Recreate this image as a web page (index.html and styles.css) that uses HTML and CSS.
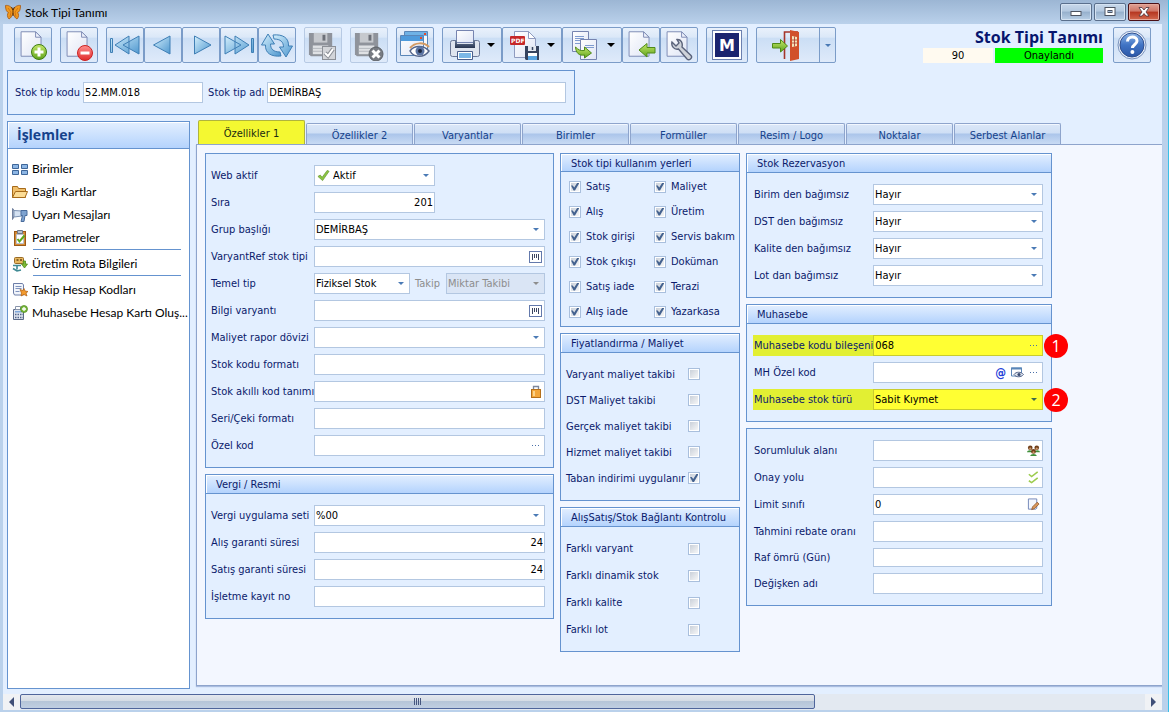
FILE: index.html
```html
<!DOCTYPE html>
<html lang="tr">
<head>
<meta charset="utf-8">
<title>Stok Tipi Tanımı</title>
<link rel="stylesheet" href="styles.css">
</head>
<body>
<svg class="defs" aria-hidden="true">
  <defs>
    <linearGradient id="blue" x1="0" y1="0" x2="1" y2="1"><stop offset="0" stop-color="#d4effc"/><stop offset="1" stop-color="#4e97cf"/></linearGradient>
    <linearGradient id="page" x1="0" y1="0" x2="1" y2="1"><stop offset="0" stop-color="#ffffff"/><stop offset="1" stop-color="#dfe5f5"/></linearGradient>
    <linearGradient id="green" x1="0" y1="0" x2="0" y2="1"><stop offset="0" stop-color="#c5e86a"/><stop offset="1" stop-color="#5fa31c"/></linearGradient>
    <linearGradient id="red" x1="0" y1="0" x2="0" y2="1"><stop offset="0" stop-color="#ff8f8f"/><stop offset="1" stop-color="#e02a2a"/></linearGradient>
    <linearGradient id="steel" x1="0" y1="0" x2="0" y2="1"><stop offset="0" stop-color="#6f7f9c"/><stop offset="1" stop-color="#28344f"/></linearGradient>
    <linearGradient id="orb" x1="0" y1="0" x2="0" y2="1"><stop offset="0" stop-color="#8fb6e8"/><stop offset="0.5" stop-color="#3f73c4"/><stop offset="1" stop-color="#2c57a6"/></linearGradient>
    <symbol id="i-page" viewBox="0 0 32 32"><path d="M4.500 2.500h16l6 6v21h-22z" fill="url(#page)" stroke="#7684b0"/><path d="M20.500 2.500v6h6z" fill="#eef2fb" stroke="#7684b0"/></symbol>
    <symbol id="i-floppy" viewBox="0 0 32 32"><path d="M2 4h24v24H4l-2-2z" fill="#8f939b"/><path d="M7 4h14v10H7z" fill="#c6c9ce"/><rect x="16" y="6" width="3" height="6" fill="#6c7078"/><path d="M6 17h16v9H6z" fill="#dfe1e4"/><path d="M6 20h16M6 23h16" stroke="#b5b8be"/></symbol>
    <symbol id="i-bar" viewBox="0 0 13 12"><rect x="0.500" y="0.500" width="12" height="11" fill="#fff" stroke="#6379ac"/><path d="M3.500 3v6M9.500 3v6" stroke="#3a4460"/><path d="M5.500 3v4M7.500 3v4" stroke="#3a4460"/></symbol>
    <symbol id="i-dots" viewBox="0 0 9 3"><path d="M1 1h1v1H1zM4 1h1v1H4zM7 1h1v1H7z" fill="#4a6fa8"/></symbol>
  </defs>
</svg>

<div class="window">
  <header class="titlebar">
    <svg class="logo" viewBox="0 0 16 16"><path d="M8 6C6 2 3 1 0.500 1.500c0 4 1 6.500 3 7C2 10 2 13 4 15c2-1 3-3 4-6 1 3 2 5 4 6 2-2 2-5 0.500-6.500 2-0.500 3-3 3-7C13 1 10 2 8 6z" fill="#f09a20" stroke="#a8560c" stroke-width="0.800"/><path d="M3 4l3 4L5 13M13 4l-3 4 1 5" stroke="#c96c10" fill="none" stroke-width="0.800"/><path d="M8 5v7M8 6L6.500 3M8 6l1.500-3" stroke="#5b3008" fill="none"/></svg>
    <h1>Stok Tipi Tanımı</h1>
    <div class="winbtns">
      <button aria-label="Küçült"><svg viewBox="0 0 12 12"><rect x="1" y="5.500" width="10" height="4" fill="#fff" stroke="#4c5360"/></svg></button>
      <button aria-label="Büyüt"><svg viewBox="0 0 12 12"><rect x="1" y="1.500" width="10" height="8" fill="#fff" stroke="#4c5360"/><rect x="4" y="4.500" width="4" height="2" fill="#9fb8d6" stroke="#4c5360"/></svg></button>
      <button class="close" aria-label="Kapat"><svg viewBox="0 0 12 12"><path d="M1 1.500h3l2 2.500 2-2.500h3L8 6l3 4H8L6 7.500 4 10H1l3-4z" fill="#fff" stroke="#4a3038" stroke-width="0.800"/></svg></button>
    </div>
  </header>

  <main class="client">
    <div class="top">
      <nav class="toolbar">
        <div class="group"><button aria-label="Yeni"><svg viewBox="0 0 32 32"><use href="#i-page" width="29" height="30"/><circle cx="22" cy="23" r="7.500" fill="url(#green)" stroke="#3f7d12"/><path d="M22 18.500v9M17.500 23h9" stroke="#fff" stroke-width="3"/></svg></button></div>
        <div class="group"><button aria-label="Sil"><svg viewBox="0 0 32 32"><use href="#i-page" width="29" height="30"/><circle cx="22" cy="24" r="7.500" fill="url(#red)" stroke="#c22"/><path d="M17.500 24h9" stroke="#fff" stroke-width="3"/></svg></button></div>
        <div class="group">
          <button aria-label="İlk"><svg viewBox="0 0 32 32"><path d="M1.500 9.500h2v14h-2zM20 7v18L6 16zM30 7v18L14 16z" fill="url(#blue)" stroke="#3f7fb5"/></svg></button>
          <button aria-label="Önceki"><svg viewBox="0 0 32 32"><path d="M23 7v18L6.500 16z" fill="url(#blue)" stroke="#3f7fb5"/></svg></button>
          <button aria-label="Sonraki"><svg viewBox="0 0 32 32"><path d="M9.500 7v18L26 16z" fill="url(#blue)" stroke="#3f7fb5"/></svg></button>
          <button aria-label="Son"><svg viewBox="0 0 32 32"><path d="M28.500 9.500h2v14h-2zM12 7v18l14-9zM2 7v18l16-9z" fill="url(#blue)" stroke="#3f7fb5"/></svg></button>
          <button aria-label="Yenile"><svg viewBox="0 0 32 32"><path d="M0.500 16L7 5l6.500 10h-4c0 5 3 8 9.500 8l1 4C10 28 4 24 4.500 16z" fill="url(#blue)" stroke="#3f7fb5"/><path d="M31.500 17L25 28l-6.500-10h4c0-5-3-8-9.500-8l-1-4C22 5 28 9 27.500 17z" fill="url(#blue)" stroke="#3f7fb5"/></svg></button>
        </div>
        <div class="group"><button disabled aria-label="Kaydet"><svg viewBox="0 0 32 32"><use href="#i-floppy" width="31" height="31"/><rect x="15.500" y="17.500" width="13" height="13" fill="#d3d5d9" stroke="#8c9097"/><path d="M18 24l3 3 5-7" stroke="#8c9097" stroke-width="4" fill="none"/><path d="M18 24l3 3 5-7" stroke="#fff" stroke-width="2" fill="none"/></svg></button></div>
        <div class="group"><button disabled aria-label="İptal"><svg viewBox="0 0 32 32"><use href="#i-floppy" width="31" height="31"/><circle cx="23" cy="25" r="7" fill="#777b82" stroke="#5e6268"/><path d="M19.500 21.500l7 7M26.500 21.500l-7 7" stroke="#fff" stroke-width="3"/></svg></button></div>
        <div class="group"><button aria-label="İzle"><svg viewBox="0 0 32 32"><path d="M5.500 2.500h23v18h-23z" fill="#f6f9fe" stroke="#5a86b8"/><path d="M6 3h22v4H6z" fill="#6fb2e6"/><path d="M1.500 6.500h23v20h-23z" fill="url(#page)" stroke="#5a86b8"/><path d="M2 7h22v5H2z" fill="#4f9bdc"/><path d="M25 4h2v2h-2zM21 8h2v2h-2z" fill="#e24a2c"/><path d="M11 22c4-6 14-6 19 0-5 7-15 7-19 0z" fill="#fff" stroke="#54658a" stroke-width="1.500"/><path d="M11 19c5-6 14-6 19-1" stroke="#d39a62" stroke-width="2" fill="none"/><circle cx="21" cy="22" r="4.500" fill="#5b74a3"/><circle cx="21" cy="22" r="2" fill="#1d2740"/></svg></button></div>
        <div class="group">
          <button class="drop" aria-label="Yazdır"><svg viewBox="0 0 32 32"><rect x="1.500" y="11.500" width="29" height="16" rx="2" fill="#dfe4ee" stroke="#6b7796"/><path d="M7.500 1.500h17v12h-17z" fill="url(#page)" stroke="#7684b0"/><path d="M6 11h2v4h16v-4h2v8H6z" fill="url(#steel)"/><path d="M8.500 22.500h15v8h-15z" fill="#fff" stroke="#4b5f8c"/><path d="M10 24h12v5H10z" fill="#7cb7e6"/></svg><i class="arrow"></i></button>
          <button class="drop" aria-label="PDF"><svg viewBox="0 0 32 32"><path d="M5.500 2.500h14l7 7v19h-21z" fill="url(#page)" stroke="#8f9bbf"/><path d="M19.500 2.500v7h7z" fill="#fff" stroke="#8f9bbf"/><rect x="1" y="7" width="15" height="9" rx="1" fill="#c62828"/><text class="pdf" x="2" y="14">PDF</text><path d="M16 17h14v14H17l-1-1z" fill="#35435f"/><path d="M19 17h8v5h-8z" fill="#e2e7f0"/><path d="M23.500 18v3" stroke="#35435f" stroke-width="1.500"/><path d="M19 24h9v7h-9z" fill="#fff"/><path d="M19 27h9v4h-9z" fill="#58a3e0"/></svg><i class="arrow"></i></button>
          <button class="drop" aria-label="Kopyala"><svg viewBox="0 0 32 32"><path d="M3.500 2.500h16v20h-16z" fill="url(#page)" stroke="#7684b0"/><path d="M6 7.500h9M6 9.500h9M6 11.500h9M6 14.500h6" stroke="#7f9cd0"/><path d="M11.500 10.500h16v20h-16z" fill="url(#page)" stroke="#7684b0"/><path d="M16 16.500h9M16 18.500h9" stroke="#7f9cd0"/><path d="M6.500 18c3 3 5 4 9 3.500V18l7 6-7 5v-3C10 27 7 24 6.500 18z" fill="url(#green)" stroke="#4f8a18"/></svg><i class="arrow"></i></button>
          <button aria-label="Aktar"><svg viewBox="0 0 32 32"><use href="#i-page" width="29" height="30"/><path d="M14 21l8-6.500v4h8v5.500h-8v4z" fill="url(#green)" stroke="#4f8a18"/></svg></button>
          <button aria-label="Ayarlar"><svg viewBox="0 0 32 32"><use href="#i-page" width="29" height="30"/><path d="M9 13c-1 4 2 8 6.500 7L24 30c2 2 6-1 4-3.500L19 18c1-4-1-8-5-7.500l2 3.500-3 3z" fill="#cfd3da" stroke="#59627a" stroke-width="1.400"/></svg></button>
        </div>
        <div class="group"><button class="mid" aria-label="M"><span class="m">M</span></button></div>
        <div class="group"><button class="exit" aria-label="Çıkış"><svg viewBox="0 0 32 32"><path d="M14.500 30V3H28" stroke="#a5352a" stroke-width="1.600" fill="none"/><path d="M20 1l9 2v27l-9 2z" fill="#d1502a"/><path d="M22 7l5 1v9l-5 1z" fill="#f5e3b8"/><path d="M24.500 7.500v10M22 11h5M22 14h5" stroke="#a5352a" stroke-width="0.800"/><path d="M2.500 14.500h8v-4l7 6.500-7 6v-4h-8z" fill="url(#green)" stroke="#4f8a18"/></svg><span class="split"><i class="arrow blue"></i></span></button></div>
      </nav>
      <div class="status">
        <h2>Stok Tipi Tanımı</h2>
        <div class="badges"><span class="num">90</span><span class="ok">Onaylandı</span></div>
      </div>
      <button class="help" aria-label="Yardım"><svg viewBox="0 0 32 32"><circle cx="16" cy="16" r="14" fill="#e8eef8" stroke="#7a93bd"/><circle cx="16" cy="16" r="12" fill="url(#orb)" stroke="#2f4f8f"/><path d="M11.500 12.500c0-6 9.500-6 9.500-0.500 0 3.500-4.500 3.500-4.500 7" stroke="#fff" stroke-width="3" fill="none"/><circle cx="16.400" cy="23" r="2" fill="#fff"/></svg></button>
    </div>

    <form class="search box">
      <label for="kod">Stok tip kodu</label><input class="in code" id="kod" value="52.MM.018">
      <label for="ad">Stok tip adı</label><input class="in name" id="ad" value="DEMİRBAŞ">
    </form>

    <div class="body">
      <aside class="side">
        <h3>İşlemler</h3>
        <ul>
          <li><a href="#"><svg viewBox="0 0 16 16"><path d="M0.500 3.500h6v4h-6zM9.500 3.500h6v4h-6zM0.500 9.500h6v4h-6zM9.500 9.500h6v4h-6z" fill="#8db6e4" stroke="#3e6699"/></svg>Birimler</a></li>
          <li><a href="#"><svg viewBox="0 0 16 16"><path d="M0.500 13.500v-11h5l1 2h7v9z" fill="#f0bf6a" stroke="#a66a1a"/><path d="M0.500 13.500l3-6h12l-2.500 6z" fill="#fbdc96" stroke="#a66a1a"/></svg>Bağlı Kartlar</a></li>
          <li><a href="#"><svg viewBox="0 0 16 16"><path d="M0.500 1.500c2 0 2 9 0 11z" fill="#e3e8f2" stroke="#73829f"/><path d="M2 3.500l8 0.500v5L2 10z" fill="#d5e2f2" stroke="#7d93b3"/><path d="M9 3.500h6v5h-2l-1 6H9l1.500-6H9z" fill="#7ea3d0" stroke="#4a6c9c"/></svg>Uyarı Mesajları</a></li>
          <li><a href="#"><svg viewBox="0 0 16 16"><rect x="2.500" y="1.500" width="11" height="14" fill="#d58a35" stroke="#9a5a18"/><path d="M4.500 4.500h7v9h-7z" fill="#fff" stroke="#b9c2cf"/><path d="M5.500 0.500h5v3h-5z" fill="#b8c0cc" stroke="#6d7788"/><path d="M5.500 9l2 2.500 5-6" stroke="#5ba81c" stroke-width="2" fill="none"/></svg>Parametreler</a></li>
          <li class="rule"><a href="#"><svg viewBox="0 0 16 16"><rect x="2.500" y="1.500" width="9" height="6" rx="1" fill="#e6b860" stroke="#9a6b26"/><path d="M4.500 4h2M8 4h2" stroke="#6b4613" stroke-width="1.500"/><path d="M11 5h2.500v3h2L12.500 12l-3-4h2z" fill="#7fba35" stroke="#4f8a18" stroke-width="0.800"/><path d="M1 9.500h8M5 9.500v4M1 12.500l4 2.500 4-1" stroke="#3f8a94" stroke-width="1.600" fill="none"/></svg>Üretim Rota Bilgileri</a></li>
          <li class="rule"><a href="#"><svg viewBox="0 0 16 16"><path d="M1.500 1.500h9l1 1.500v10h-9l-1-2z" fill="#f2f5fb" stroke="#6d7ea8"/><path d="M3.500 4.500h6M3.500 6.500h6M3.500 9.500h4" stroke="#7f93bd"/><path d="M8 7.500l3 1 1-2 1 2.500 3 0.500-2 1.500 1 3-3-1.500-3 1.500 0.500-3z" fill="#f29a2e" stroke="#b05c0c" stroke-width="0.700"/></svg>Takip Hesap Kodları</a></li>
          <li><a href="#"><svg viewBox="0 0 16 16"><path d="M1.500 4.500h10v10h-10z" fill="#dfe5ef" stroke="#5a6a88"/><path d="M3 6h7v1.500H3z" fill="#7fa7d8"/><path d="M3 9.500h8M3 12.500h8" stroke="#54658a" stroke-width="1.500" stroke-dasharray="1.500 1"/><path d="M3.500 1.500h5v3h-5z" fill="#fff" stroke="#8894aa"/><circle cx="12" cy="4" r="3.500" fill="#7aba3c" stroke="#4c861c" stroke-width="0.700"/><path d="M12 2v4M10 4h4" stroke="#fff" stroke-width="1.300"/></svg>Muhasebe Hesap Kartı Oluş...</a></li>
        </ul>
      </aside>

      <section class="tabs">
        <div class="tablist" role="tablist">
          <button role="tab" aria-selected="true" class="on">Özellikler 1</button>
          <button role="tab">Özellikler 2</button>
          <button role="tab">Varyantlar</button>
          <button role="tab">Birimler</button>
          <button role="tab">Formüller</button>
          <button role="tab">Resim / Logo</button>
          <button role="tab">Noktalar</button>
          <button role="tab">Serbest Alanlar</button>
        </div>

        <div class="tabpage">
          <div class="col">
            <section class="box rows">
              <div class="row"><label for="a1">Web aktif</label><span class="sel short tick"><svg class="lead" viewBox="0 0 14 14"><path d="M1 8l2.500-1.500L5.500 9 11 1.500 13 2.500 6 12.500z" fill="#8cc63f" stroke="#6a9a3a" stroke-width="0.800"/></svg><select id="a1"><option>Aktif</option></select><i class="arrow blue"></i></span></div>
              <div class="row"><label for="a2">Sıra</label><input class="in short num-r" id="a2" value="201"></div>
              <div class="row"><label for="a3">Grup başlığı</label><span class="sel"><select id="a3"><option>DEMİRBAŞ</option></select><i class="arrow blue"></i></span></div>
              <div class="row"><label for="a4">VaryantRef stok tipi</label><span class="fld"><input class="in" id="a4"><span class="ends"><svg class="bar"><use href="#i-bar"/></svg></span></span></div>
              <div class="row"><label for="a5">Temel tip</label><span class="sel mini"><select id="a5"><option>Fiziksel Stok</option></select><i class="arrow blue"></i></span><label class="off" for="a6">Takip</label><span class="sel dis"><select id="a6" disabled><option>Miktar Takibi</option></select><i class="arrow grey"></i></span></div>
              <div class="row"><label for="a7">Bilgi varyantı</label><span class="fld"><input class="in" id="a7"><span class="ends"><svg class="bar"><use href="#i-bar"/></svg></span></span></div>
              <div class="row"><label for="a8">Maliyet rapor dövizi</label><span class="sel"><select id="a8"><option></option></select><i class="arrow blue"></i></span></div>
              <div class="row"><label for="a9">Stok kodu formatı</label><input class="in" id="a9"></div>
              <div class="row"><label for="a10">Stok akıllı kod tanımı</label><span class="fld"><input class="in" id="a10"><span class="ends"><svg class="lock" viewBox="0 0 10 13"><path d="M2.500 6V1.500h5V6" fill="none" stroke="#7d879c" stroke-width="1.300"/><rect x="0.500" y="4.500" width="9" height="8" fill="#f3a73c" stroke="#b4701c"/><path d="M2 6h2v5H2z" fill="#fbd48c"/></svg></span></span></div>
              <div class="row"><label for="a11">Seri/Çeki formatı</label><input class="in" id="a11"></div>
              <div class="row"><label for="a12">Özel kod</label><span class="fld"><input class="in" id="a12"><span class="ends"><svg class="dots"><use href="#i-dots"/></svg></span></span></div>
            </section>
            <section class="box">
              <h4>Vergi / Resmi</h4>
              <div class="rows">
                <div class="row"><label for="b1">Vergi uygulama seti</label><span class="sel"><select id="b1"><option>%00</option></select><i class="arrow blue"></i></span></div>
                <div class="row"><label for="b2">Alış garanti süresi</label><input class="in num-r" id="b2" value="24"></div>
                <div class="row"><label for="b3">Satış garanti süresi</label><input class="in num-r" id="b3" value="24"></div>
                <div class="row"><label for="b4">İşletme kayıt no</label><input class="in" id="b4"></div>
              </div>
            </section>
          </div>

          <div class="col">
            <section class="box">
              <h4 class="low">Stok tipi kullanım yerleri</h4>
              <div class="pairs">
                <label><input type="checkbox" checked>Satış</label><label><input type="checkbox" checked>Maliyet</label>
                <label><input type="checkbox" checked>Alış</label><label><input type="checkbox" checked>Üretim</label>
                <label><input type="checkbox" checked>Stok girişi</label><label><input type="checkbox" checked>Servis bakım</label>
                <label><input type="checkbox" checked>Stok çıkışı</label><label><input type="checkbox" checked>Doküman</label>
                <label><input type="checkbox" checked>Satış iade</label><label><input type="checkbox" checked>Terazi</label>
                <label><input type="checkbox" checked>Alış iade</label><label><input type="checkbox" checked>Yazarkasa</label>
              </div>
            </section>
            <section class="box">
              <h4>Fiyatlandırma / Maliyet</h4>
              <div class="checks">
                <label><span>Varyant maliyet takibi</span><input type="checkbox"></label>
                <label><span>DST Maliyet takibi</span><input type="checkbox"></label>
                <label><span>Gerçek maliyet takibi</span><input type="checkbox"></label>
                <label><span>Hizmet maliyet takibi</span><input type="checkbox"></label>
                <label><span>Taban indirimi uygulanır</span><input type="checkbox" checked></label>
              </div>
            </section>
            <section class="box">
              <h4>AlışSatış/Stok Bağlantı Kontrolu</h4>
              <div class="checks wide">
                <label><span>Farklı varyant</span><input type="checkbox"></label>
                <label><span>Farklı dinamik stok</span><input type="checkbox"></label>
                <label><span>Farklı kalite</span><input type="checkbox"></label>
                <label><span>Farklı lot</span><input type="checkbox"></label>
              </div>
            </section>
          </div>

          <div class="col third">
            <section class="box">
              <h4>Stok Rezervasyon</h4>
              <div class="rows">
                <div class="row"><label for="c1">Birim den bağımsız</label><span class="sel"><select id="c1"><option>Hayır</option></select><i class="arrow blue"></i></span></div>
                <div class="row"><label for="c2">DST den bağımsız</label><span class="sel"><select id="c2"><option>Hayır</option></select><i class="arrow blue"></i></span></div>
                <div class="row"><label for="c3">Kalite den bağımsız</label><span class="sel"><select id="c3"><option>Hayır</option></select><i class="arrow blue"></i></span></div>
                <div class="row"><label for="c4">Lot dan bağımsız</label><span class="sel"><select id="c4"><option>Hayır</option></select><i class="arrow blue"></i></span></div>
              </div>
            </section>
            <section class="box">
              <h4>Muhasebe</h4>
              <div class="rows">
                <div class="row hl"><label for="d1">Muhasebe kodu bileşeni</label><span class="fld"><input class="in" id="d1" value="068"><span class="ends"><svg class="dots"><use href="#i-dots"/></svg></span></span><b class="pin">1</b></div>
                <div class="row"><label for="d2">MH Özel kod</label><span class="fld"><input class="in" id="d2"><span class="ends"><span class="at">@</span><svg class="eye" viewBox="0 0 13 12"><path d="M0.500 1.500h10v8h-10z" fill="#fff" stroke="#5a86b8"/><path d="M0 1h11v2H0z" fill="#5a86b8"/><path d="M3 8c2-3 7-3 9.500 0-2.500 3-7.500 3-9.500 0z" fill="#dfe5ef" stroke="#54658a"/><circle cx="8" cy="8" r="1.600" fill="#3a4a70"/></svg><svg class="dots"><use href="#i-dots"/></svg></span></span></div>
                <div class="row hl"><label for="d3">Muhasebe stok türü</label><span class="sel"><select id="d3"><option>Sabit Kıymet</option></select><i class="arrow dark"></i></span><b class="pin">2</b></div>
              </div>
            </section>
            <section class="box rows">
              <div class="row"><label for="e1">Sorumluluk alanı</label><span class="fld"><input class="in" id="e1"><span class="ends"><svg viewBox="0 0 14 13"><path d="M0 8.500c0-3 6-3 6 0zM8 8.500c0-3 6-3 6 0zM3.500 12.500c0-3 7-3 7 0z" fill="#3f8f3a"/><circle cx="3.500" cy="3.500" r="2.500" fill="#6f3f1a"/><circle cx="10.500" cy="3.500" r="2.500" fill="#6f3f1a"/><circle cx="7" cy="7.500" r="2.600" fill="#6f3f1a"/><circle cx="3.500" cy="4.500" r="1.200" fill="#d09868"/><circle cx="10.500" cy="4.500" r="1.200" fill="#d09868"/><circle cx="7" cy="8.500" r="1.200" fill="#d09868"/></svg></span></span></div>
              <div class="row"><label for="e2">Onay yolu</label><span class="fld"><input class="in" id="e2"><span class="ends"><svg viewBox="0 0 14 13"><path d="M2 3l3 2.500L11.500 0.500M2 10l3 2L11.500 7" stroke="#9ccc4e" stroke-width="1.700" fill="none"/></svg></span></span></div>
              <div class="row"><label for="e3">Limit sınıfı</label><span class="fld"><input class="in" id="e3" value="0"><span class="ends"><svg viewBox="0 0 14 13"><path d="M1.500 0.500h9v10l-1 1h-8z" fill="#f4f7fd" stroke="#6d83b5"/><path d="M5 12l1-3 5-5 2 2-5 5z" fill="#d8965a" stroke="#8a5228" stroke-width="0.800"/></svg></span></span></div>
              <div class="row"><label for="e4">Tahmini rebate oranı</label><input class="in" id="e4"></div>
              <div class="row slim"><label for="e5">Raf ömrü (Gün)</label><input class="in" id="e5"></div>
              <div class="row"><label for="e6">Değişken adı</label><input class="in" id="e6"></div>
            </section>
          </div>
        </div>
      </section>
    </div>

    <div class="hscroll">
      <button class="step" aria-label="Sola kaydır"><i class="tri left"></i></button>
      <div class="track"><div class="thumb"><span></span><span></span><span></span><span></span></div></div>
      <button class="step" aria-label="Sağa kaydır"><i class="tri right"></i></button>
    </div>
  </main>
</div>
</body>
</html>
```
FILE: styles.css
```css
* { box-sizing: border-box; margin: 0; padding: 0; }

:root {
  --line: #6593cf;
  --field: #b3c7e1;
  --ink: #0a1a6b;
  --bg: #e3efff;
}

body { height: 100vh; overflow: hidden; }
body, button, input, select {
  font-family: "DejaVu Sans Condensed", "Liberation Sans", sans-serif;
  font-size: 11px;
}
.defs { position: absolute; width: 0; height: 0; }

.window {
  display: flex;
  flex-direction: column;
  height: 100vh;
  padding: 0 6px 2px 3px;
  background: linear-gradient(#9cb6d4, #bad1eb 24px, #bad1eb);
  border-right: 1px solid #38c0e8;
}

/* title bar */
.titlebar { display: flex; align-items: center; flex: 0 0 24px; padding: 0 0 0 2px; }
.logo { width: 16px; height: 16px; }
.titlebar h1 {
  flex: 1;
  margin-left: 4px;
  font: 12px Lato, "Open Sans", sans-serif;
  color: #000;
}
.winbtns { display: flex; gap: 2px; margin-right: 2px; }
.winbtns button {
  display: flex;
  align-items: center;
  justify-content: center;
  width: 32px;
  height: 18px;
  border: 1px solid #5a6f8c;
  border-radius: 2px;
  background: linear-gradient(#c8d8ea, #b3c8e0 45%, #96b0cc 50%, #b9cfe6);
  box-shadow: inset 0 0 0 1px #d5e3f2;
}
.winbtns svg { width: 12px; height: 12px; }
.winbtns .close {
  border-color: #4a1016;
  background: linear-gradient(#e0a296, #cf7565 45%, #b5351f 50%, #d3694f);
  box-shadow: inset 0 0 0 1px #e5a99c;
}

.client { display: flex; flex-direction: column; flex: 1; min-height: 0; background: var(--bg); }

/* toolbar */
.top { display: flex; align-items: flex-start; padding: 3px 11px 0; }
.toolbar { display: flex; gap: 8px; flex: 1; }
.group { display: flex; }
.toolbar button, .help {
  display: flex;
  align-items: center;
  justify-content: center;
  width: 38px;
  height: 36px;
  border: 1px solid #7b9cc8;
  border-radius: 2px;
  background: linear-gradient(#e9f1fb, #dbe8f8 27%, #cbdef5 30%, #dfeafa);
}
.toolbar button:disabled { border-color: #b7cae4; }
.toolbar svg, .help svg { width: 32px; height: 32px; }
.toolbar .drop { width: 60px; gap: 6px; }
.toolbar .mid { width: 42px; }
.toolbar .exit { width: 80px; justify-content: flex-end; }
.split {
  display: flex;
  align-items: center;
  justify-content: center;
  width: 16px;
  height: 34px;
  margin-left: 17px;
  border-left: 1px solid #7b9cc8;
}
.m {
  display: flex;
  align-items: center;
  justify-content: center;
  width: 30px;
  height: 30px;
  border: 1px solid #6b80b0;
  background: #1b246f;
  box-shadow: inset 0 0 0 2px #fff;
  font: 900 16px "DejaVu Sans", sans-serif;
  color: #fff;
}
.pdf { font: bold 6px "DejaVu Sans", sans-serif; fill: #fff; }

.arrow {
  width: 0;
  height: 0;
  border: 4px solid transparent;
  border-top-color: #000;
  border-bottom-width: 0;
}
.arrow.blue, .arrow.grey, .arrow.dark { border-width: 3px 3px 0; }
.arrow.blue { border-top-color: #4a7ab5; }
.arrow.grey { border-top-color: #8d8d8d; }
.arrow.dark { border-top-color: #3c6a4a; }

.status { width: 180px; margin-right: 10px; text-align: right; }
.status h2 { font: bold 16px/21px "Open Sans", "Noto Sans", sans-serif; color: #06156e; }
.badges { display: flex; gap: 2px; text-align: center; line-height: 16px; }
.badges span { height: 15px; }
.num { flex: 0 0 70px; background: #fffaf0; }
.ok { flex: 1; background: #00ff00; }

/* framed groups */
.box { border: 1px solid var(--line); background: var(--bg); }
.box h4 {
  height: 19px;
  padding-left: 10px;
  border-bottom: 1px solid var(--line);
  background: linear-gradient(#e3efff, #b4d3fd);
  box-shadow: inset 1px 1px 0 #fff;
  font: 11px/19px "DejaVu Sans Condensed", sans-serif;
  color: var(--ink);
}
.box h4.low { height: 18px; }

label { color: var(--ink); white-space: nowrap; }

.in, select {
  width: 100%;
  height: 21px;
  padding: 0 1px;
  border: 1px solid var(--field);
  border-radius: 0;
  background: #fff;
  color: #000;
}
select { appearance: none; opacity: 1; }

.search {
  display: flex;
  align-items: center;
  width: 49%;
  height: 45px;
  margin: 7px 0 0 4px;
  padding: 0 8px 0 7px;
}
.search .code { flex: 0 0 120px; margin: 0 5px 0 3px; }
.search .name { flex: 1; margin-left: 3px; }

.body { display: flex; flex: 1; min-height: 0; padding: 6px 0 0 4px; }

/* sidebar */
.side { flex: 0 0 183px; min-width: 0; border: 1px solid var(--line); background: #fff; }
.side h3 {
  height: 27px;
  padding-left: 9px;
  border-bottom: 1px solid var(--line);
  background: linear-gradient(#e3efff, #b4d3fd);
  box-shadow: inset 1px 1px 0 #fff;
  font: bold 14px/26px "Open Sans", "Noto Sans", sans-serif;
  color: #15428b;
}
.side ul { padding: 8px 0 0 4px; list-style: none; }
.side li { position: relative; }
.side a {
  display: flex;
  align-items: center;
  gap: 4px;
  height: 23px;
  font: 12px Lato, "Open Sans", sans-serif;
  color: #000;
  text-decoration: none;
  white-space: nowrap;
}
.side svg { flex: 0 0 16px; height: 16px; }
.side .rule { padding-top: 3px; }
.side .rule::before {
  content: "";
  position: absolute;
  top: 0;
  left: 21px;
  right: 8px;
  border-top: 1px solid var(--line);
}

/* tabs */
.tabs { display: flex; flex-direction: column; flex: 1; min-width: 0; margin-left: 6px; padding-bottom: 3px; }
.tablist { display: flex; align-items: flex-end; gap: 1px; height: 23px; padding-left: 2px; }
.tablist button {
  width: 107px;
  height: 21px;
  padding-top: 2px;
  border: 1px solid #8ea4cc;
  border-bottom: 0;
  border-radius: 2px 2px 0 0;
  background: linear-gradient(#dbe7f8, #cfdff5 45%, #abc5ea 50%, #c9dbf4);
  box-shadow: inset 0 1px 0 #f2f7ff;
  color: #15428b;
}
.tablist .on {
  height: 24px;
  border-color: #b0b43c;
  background: #f4f831;
  box-shadow: none;
  color: #1a2a10;
}
.tabpage {
  display: grid;
  grid-template-columns: 349fr 180fr 306fr;
  gap: 6px;
  align-items: start;
  flex: 1;
  padding: 8px 110px 8px 8px;
  border: solid #8ea4cc;
  border-width: 1px 0 1px 1px;
  background: #f3f7ff;
  box-shadow: 0 1px 1px #a9bde0;
}
.col { display: grid; gap: 6px; }

.rows { display: grid; gap: 6px; padding: 11px 8px 11px 5px; }
.row { display: flex; align-items: center; position: relative; }
.row > label { flex: 0 0 103px; }
.third .rows { padding-left: 6px; }
.third .row > label { flex-basis: 120px; padding-left: 1px; }
.row > .short { flex: 0 0 121px; }
.slim .in { height: 19px; }
.num-r { text-align: right; }

.fld, .sel { position: relative; display: block; flex: 1; min-width: 0; }
.sel .arrow { position: absolute; top: 9px; right: 6px; }
.sel.mini { flex: 0 0 96px; }
.row > .off { flex: 0 0 36px; padding-left: 5px; color: #8d8d8d; }
.dis select { background: #dae5f5; color: #8d8d8d; }
.tick select { padding-left: 18px; }
.lead { position: absolute; top: 4px; left: 3px; width: 13px; height: 13px; }
.ends {
  position: absolute;
  top: 0;
  right: 3px;
  display: flex;
  align-items: center;
  gap: 5px;
  height: 21px;
}
.ends svg { width: 13px; height: 13px; }
.ends .bar { width: 13px; height: 12px; }
.ends .lock { width: 10px; margin-right: 1px; }
.ends .dots { width: 9px; height: 3px; margin-right: 2px; }
.at { font: bold 12px "DejaVu Sans Condensed", sans-serif; color: #2340d8; }

.hl { background: #e2ef33; }
.hl .in, .hl select { border-color: #c8cc30; background: #ffff33; }
.pin {
  position: absolute;
  top: -1px;
  right: -25px;
  width: 24px;
  height: 24px;
  border-radius: 50%;
  background: #ff0000;
  font: 16px/24px "Open Sans", sans-serif;
  color: #fff;
  text-align: center;
}

/* check boxes */
.pairs { display: grid; grid-template-columns: 85px 1fr; padding: 2px 0 2px 8px; }
.pairs label { display: flex; align-items: center; gap: 5px; height: 25px; }
.checks { padding: 8px 39px 9px 5px; }
.checks label { display: flex; align-items: center; justify-content: space-between; height: 26px; }
.checks.wide label { height: 27px; }
.checks.wide { padding-bottom: 8px; }
input[type="checkbox"] {
  appearance: none;
  display: grid;
  place-items: center;
  flex: 0 0 12px;
  height: 12px;
  border: 1px solid #a9bfdd;
  background: linear-gradient(135deg, #c5ccd6, #fbfbfb);
  box-shadow: inset 0 0 0 1px #fff;
}
input[type="checkbox"]:checked::after {
  content: "";
  width: 8px;
  height: 8px;
  background: #44628f;
  clip-path: polygon(0 38%, 22% 38%, 40% 62%, 80% 0, 100% 0, 100% 14%, 50% 100%, 32% 100%);
}

/* scrollbar */
.hscroll { display: flex; flex: 0 0 16px; margin-top: 5px; }
.step { display: flex; align-items: center; justify-content: center; width: 17px; border: 0; background: #f0f2f5; }
.track { display: flex; flex: 1; background: #e3e9f1; }
.track::after { content: ""; flex: 5; }
.thumb {
  display: flex;
  align-items: center;
  justify-content: center;
  gap: 1px;
  flex: 12;
  height: 15px;
  border: 1px solid #4f659b;
  border-radius: 2px;
  background: linear-gradient(#e4e8ee, #d5dce5 45%, #b6c5d8 50%, #c0cee2);
}
.thumb span { width: 1px; height: 7px; background: #45557e; }
.tri { width: 0; height: 0; border: 5px solid transparent; }
.tri.left { border-left-width: 0; border-right-color: #3f4f78; }
.tri.right { border-right-width: 0; border-left-color: #3f4f78; }
```
